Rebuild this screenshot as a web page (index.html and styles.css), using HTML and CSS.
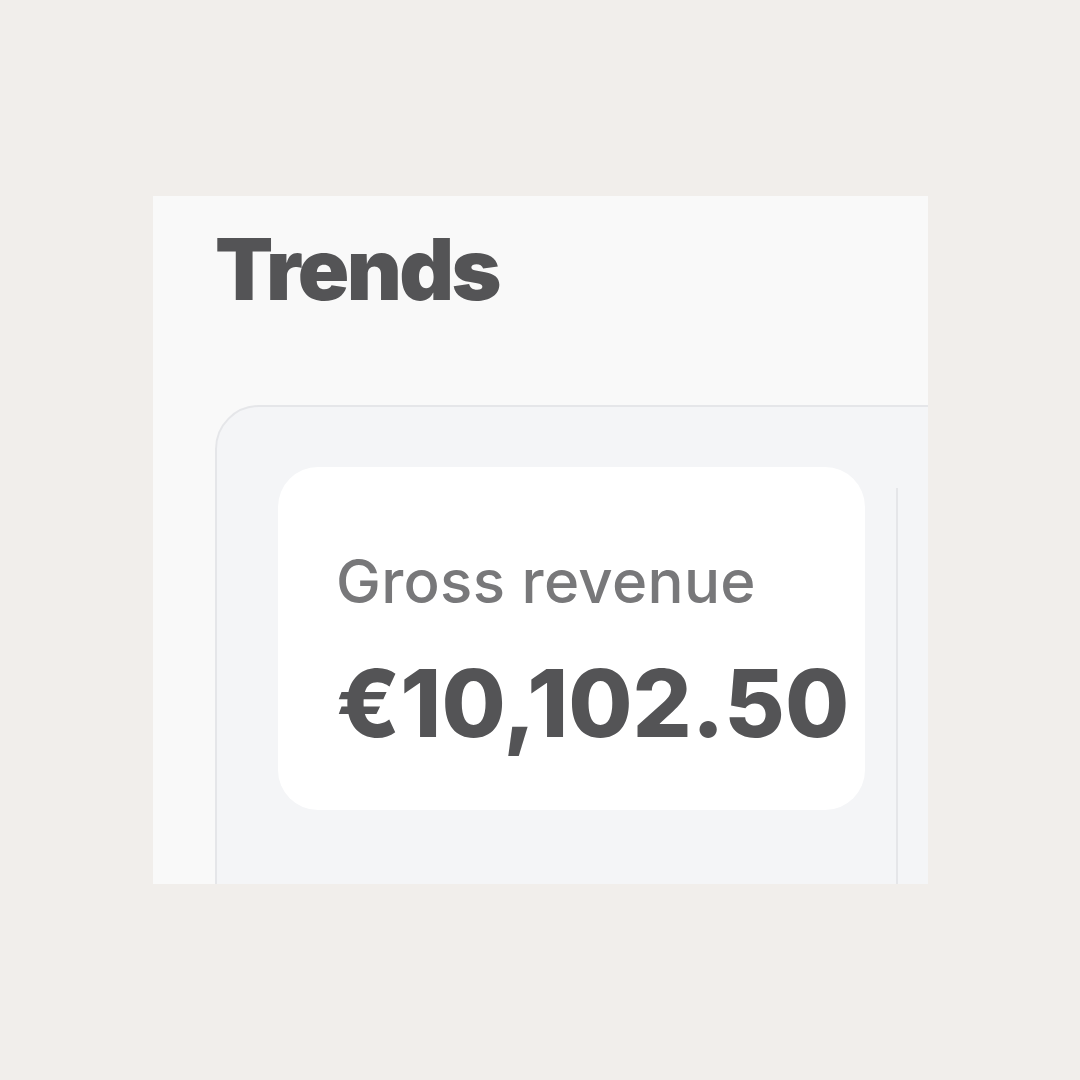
FILE: index.html
```html
<!DOCTYPE html>
<html lang="en">
<head>
<title>Trends</title>
<link rel="stylesheet" href="styles.css">
</head>
<body>
<div id="panel">
	<h1 class="title">Trends</h1>
	<div class="board">
		<div class="stat">
			<p class="label">Gross revenue</p>
			<p class="amount">€10,102.50</p>
		</div>
		<div class="divider"></div>
	</div>
</div>
</body>
</html>
```

FILE: styles.css
```css
* {
	margin: 0;
	padding: 0;
	box-sizing: border-box;
	}
body{
	background-color:#f1eeeb;
	font-family:Inter, "Liberation Sans", sans-serif;
	}
#panel{
	width:775px;
	height:688px;
	margin:196px 0 0 153px;
	padding:31px 0 0 62px;
	background-color:#f9f9f9;
	overflow:hidden;
	}
.title{
	font-size:85px;
	line-height:1;
	font-weight:900;
	letter-spacing:-0.03em;
	color:#545456;
	}
.board{
	display:flex;
	width:800px;
	height:600px;
	margin-top:93px;
	padding:60px 0 0 61px;
	border:2px solid #e5e6e9;
	border-radius:44px;
	background-color:#f4f5f7;
	}
.stat{
	width:587px;
	height:343px;
	padding:84px 0 0 58px;
	border-radius:40px;
	background-color:#fff;
	}
.label{
	font-size:60px;
	line-height:1;
	font-weight:500;
	letter-spacing:0.005em;
	color:#78787a;
	}
.amount{
	margin-top:46px;
	font-size:93px;
	line-height:1;
	font-weight:800;
	color:#545456;
	}
.divider{
	width:2px;
	height:500px;
	margin:21px 0 0 31px;
	background-color:#e5e6e9;
	}
```
